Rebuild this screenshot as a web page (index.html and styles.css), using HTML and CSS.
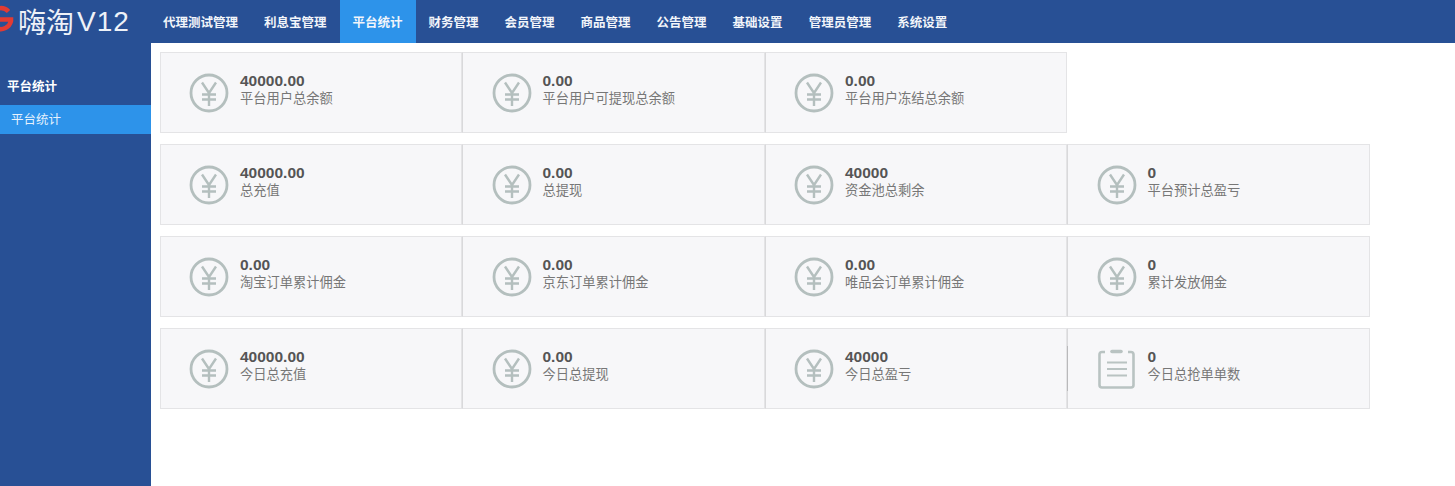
FILE: index.html
```html
<!DOCTYPE html>
<html lang="zh-CN">
<head>
<meta charset="utf-8">
<title>嗨淘V12</title>
<link rel="stylesheet" href="styles.css">
</head>
<body>
<svg class="defs" width="0" height="0" aria-hidden="true">
  <symbol id="yen" viewBox="0 0 40 40">
    <circle cx="20" cy="20" r="18" fill="none" stroke="currentColor" stroke-width="2.8"/>
    <path d="M13 9.500 L20 20 L27 9.500 M13 21.500 H27 M13 26.500 H27 M20 20 V33" fill="none" stroke="currentColor" stroke-width="2.400"/>
  </symbol>
  <symbol id="clip" viewBox="0 0 40 40">
    <path d="M8 3 H5 Q2.500 3 2.500 5.500 V36 Q2.500 38.500 5 38.500 H34 Q36.500 38.500 36.500 36 V5.500 Q36.500 3 34 3 H31" fill="none" stroke="currentColor" stroke-width="2.600"/>
    <path d="M15 2.500 H24" fill="none" stroke="currentColor" stroke-width="3.600" stroke-linecap="round"/>
    <path d="M10 13.500 H30 M10 20 H30 M10 26.500 H30" fill="none" stroke="currentColor" stroke-width="2.200"/>
  </symbol>
</svg>
<header class="topbar">
  <div class="logo">
    <svg class="logo-mark" width="30" height="43" viewBox="0 0 30 43" aria-hidden="true">
      <path d="M20.500 11.500 A10.500 10.500 0 1 0 23 21 V19.500 H12" fill="none" stroke="#e23b33" stroke-width="4.500"/>
    </svg>
    <span class="logo-cn">嗨淘</span><span class="logo-en">V12</span>
  </div>
  <nav class="nav">
    <a class="nav-item">代理测试管理</a>
    <a class="nav-item">利息宝管理</a>
    <a class="nav-item active">平台统计</a>
    <a class="nav-item">财务管理</a>
    <a class="nav-item">会员管理</a>
    <a class="nav-item">商品管理</a>
    <a class="nav-item">公告管理</a>
    <a class="nav-item">基础设置</a>
    <a class="nav-item">管理员管理</a>
    <a class="nav-item">系统设置</a>
  </nav>
</header>
<div class="layout">
  <aside class="sidebar">
    <div class="side-title">平台统计</div>
    <a class="side-item">平台统计</a>
  </aside>
  <main class="content">
    <section class="row">
      <div class="card"><svg class="icon"><use href="#yen"/></svg><div class="info"><div class="value">40000.00</div><div class="label">平台用户总余额</div></div></div>
      <div class="card"><svg class="icon"><use href="#yen"/></svg><div class="info"><div class="value">0.00</div><div class="label">平台用户可提现总余额</div></div></div>
      <div class="card"><svg class="icon"><use href="#yen"/></svg><div class="info"><div class="value">0.00</div><div class="label">平台用户冻结总余额</div></div></div>
    </section>
    <section class="row">
      <div class="card"><svg class="icon"><use href="#yen"/></svg><div class="info"><div class="value">40000.00</div><div class="label">总充值</div></div></div>
      <div class="card"><svg class="icon"><use href="#yen"/></svg><div class="info"><div class="value">0.00</div><div class="label">总提现</div></div></div>
      <div class="card"><svg class="icon"><use href="#yen"/></svg><div class="info"><div class="value">40000</div><div class="label">资金池总剩余</div></div></div>
      <div class="card"><svg class="icon"><use href="#yen"/></svg><div class="info"><div class="value">0</div><div class="label">平台预计总盈亏</div></div></div>
    </section>
    <section class="row">
      <div class="card"><svg class="icon"><use href="#yen"/></svg><div class="info"><div class="value">0.00</div><div class="label">淘宝订单累计佣金</div></div></div>
      <div class="card"><svg class="icon"><use href="#yen"/></svg><div class="info"><div class="value">0.00</div><div class="label">京东订单累计佣金</div></div></div>
      <div class="card"><svg class="icon"><use href="#yen"/></svg><div class="info"><div class="value">0.00</div><div class="label">唯品会订单累计佣金</div></div></div>
      <div class="card"><svg class="icon"><use href="#yen"/></svg><div class="info"><div class="value">0</div><div class="label">累计发放佣金</div></div></div>
    </section>
    <section class="row">
      <div class="card"><svg class="icon"><use href="#yen"/></svg><div class="info"><div class="value">40000.00</div><div class="label">今日总充值</div></div></div>
      <div class="card"><svg class="icon"><use href="#yen"/></svg><div class="info"><div class="value">0.00</div><div class="label">今日总提现</div></div></div>
      <div class="card"><svg class="icon"><use href="#yen"/></svg><div class="info"><div class="value">40000</div><div class="label">今日总盈亏</div></div></div>
      <div class="card card-mark"><svg class="icon"><use href="#clip"/></svg><div class="info"><div class="value">0</div><div class="label">今日总抢单单数</div></div></div>
    </section>
  </main>
</div>
</body>
</html>
```
FILE: styles.css
```css
* { box-sizing: border-box; }
html, body { height: 100%; }
body {
  margin: 0;
  overflow: hidden;
  background: #fff;
  font-family: "Liberation Sans", "Noto Sans CJK SC", sans-serif;
  display: flex;
  flex-direction: column;
}
.defs { position: absolute; }
.topbar {
  flex: 0 0 43px;
  display: flex;
  background: #285095;
  color: #fff;
}
.logo {
  flex: 0 0 150px;
  display: flex;
  align-items: center;
  overflow: hidden;
  color: #eef2f8;
  white-space: nowrap;
}
.logo-mark { flex: none; margin-left: -12px; }
.logo-cn {
  font-family: "Noto Sans CJK SC", sans-serif;
  font-size: 28px;
  line-height: 43px;
}
.logo-en {
  font-size: 28px;
  line-height: 43px;
  margin-left: 3px;
  letter-spacing: 1px;
}
.nav { display: flex; }
.nav-item {
  padding: 0 13px;
  line-height: 43px;
  font-family: "Noto Sans CJK SC", sans-serif;
  font-size: 12.5px;
  font-weight: 700;
  color: #f2f5fa;
}
.nav-item.active { background: #2d93ea; }
.layout { flex: 1; display: flex; min-height: 0; }
.sidebar {
  flex: 0 0 151px;
  background: #285095;
  color: #fff;
  padding-top: 33px;
}
.side-title {
  height: 29px;
  padding-left: 7px;
  line-height: 20px;
  font-family: "Noto Sans CJK SC", sans-serif;
  font-size: 12.5px;
  font-weight: 700;
}
.side-item {
  display: block;
  height: 29px;
  padding-left: 11px;
  line-height: 28px;
  background: #2d93ea;
  font-family: "Noto Sans CJK SC", sans-serif;
  font-size: 12.5px;
  color: #e6f2fd;
}
.content {
  flex: 1;
  padding: 9px 0 0 8.5px;
  display: flex;
  flex-direction: column;
  gap: 11px;
}
.row { display: flex; }
.card {
  flex: 0 0 302.5px;
  height: 81px;
  display: flex;
  align-items: center;
  padding-left: 28.5px;
  background: #f7f7f9;
  border: 1px solid #e4e4e6;
  border-left-color: #d9d9db;
}
.row .card:first-child { border-left-color: #e4e4e6; }
.icon {
  flex: none;
  width: 40px;
  height: 40px;
  color: #b4bfbe;
}
.card-mark .icon { color: #b9c3c2; }
.card-mark { position: relative; }
.card-mark::before {
  content: "";
  position: absolute;
  left: -1px;
  top: 17px;
  height: 45px;
  width: 1px;
  background: #b9b9bb;
}
.info { margin-left: 11px; padding-bottom: 7px; }
.value {
  font-size: 15.5px;
  font-weight: 700;
  line-height: 17px;
  color: #555;
}
.label {
  font-family: "Noto Sans CJK SC", sans-serif;
  font-size: 13.25px;
  line-height: 18px;
  color: #777;
}
```
